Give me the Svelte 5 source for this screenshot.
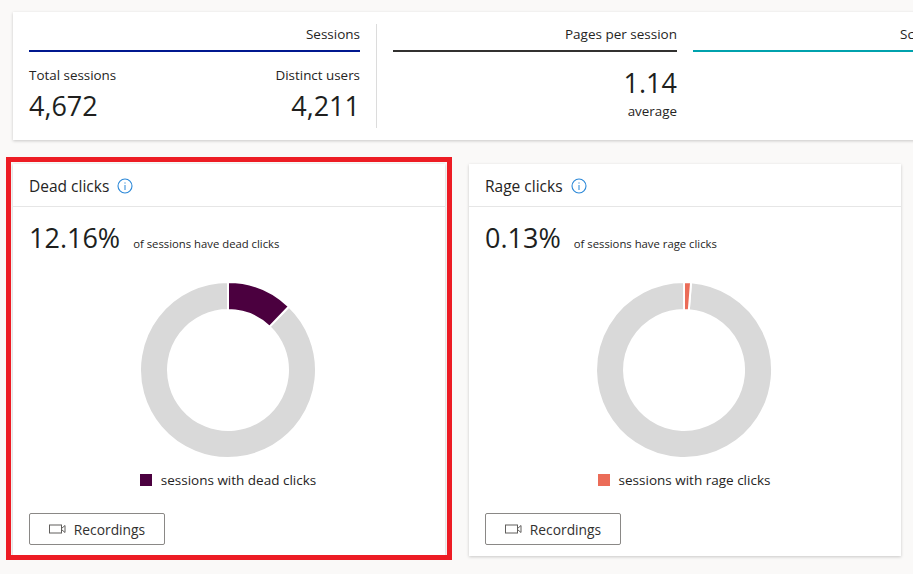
<script>
  const cards = [
    { title: 'Dead clicks', pct: '12.16%', note: 'of sessions have dead clicks', legend: 'sessions with dead clicks', color: '#4b003f', sweep: 43.8, marked: true },
    { title: 'Rage clicks', pct: '0.13%', note: 'of sessions have rage clicks', legend: 'sessions with rage clicks', color: '#eb6c58', sweep: 4.6, marked: false }
  ];

  function point(r, deg) {
    const a = ((deg - 90) * Math.PI) / 180;
    return `${(89 + r * Math.cos(a)).toFixed(2)} ${(89 + r * Math.sin(a)).toFixed(2)}`;
  }

  function slice(from, to) {
    const big = to - from > 180 ? 1 : 0;
    return `M${point(88, from)} A88 88 0 ${big} 1 ${point(88, to)} L${point(60, to)} A60 60 0 ${big} 0 ${point(60, from)} Z`;
  }
</script>

<div class="page">
  <section class="summary">
    <div class="group group--sessions">
      <div class="group__head group__head--blue">Sessions</div>
      <div class="pair">
        <div>
          <div class="label">Total sessions</div>
          <div class="big">4,672</div>
        </div>
        <div class="right">
          <div class="label">Distinct users</div>
          <div class="big">4,211</div>
        </div>
      </div>
    </div>
    <div class="divider"></div>
    <div class="group group--pages">
      <div class="group__head group__head--dark">Pages per session</div>
      <div class="right">
        <div class="big big--top">1.14</div>
        <div class="label">average</div>
      </div>
    </div>
    <div class="group group--scroll">
      <div class="group__head group__head--teal"><span class="scroll">Scroll depth</span></div>
    </div>
  </section>

  <div class="cards">
    {#each cards as card}
      <article class="card" class:card--marked={card.marked}>
        <header class="card__head">
          <h2>{card.title}</h2>
          <svg class="info" width="16" height="16" viewBox="0 0 16 16" aria-hidden="true">
            <circle cx="8" cy="8" r="7" fill="none" stroke="#2b88d8" stroke-width="1.1" />
            <rect x="7.5" y="7" width="1" height="5" fill="#2b88d8" />
            <rect x="7.5" y="4.4" width="1" height="1.2" fill="#2b88d8" />
          </svg>
        </header>
        <div class="card__stat">
          <span class="pct">{card.pct}</span>
          <span class="note">{card.note}</span>
        </div>
        <svg class="donut" width="178" height="178" viewBox="0 0 178 178" aria-hidden="true">
          <path d={slice(card.sweep, 360)} fill="#d9d9d9" stroke="#fff" stroke-width="2" />
          <path d={slice(0, card.sweep)} fill={card.color} stroke="#fff" stroke-width="2" />
        </svg>
        <div class="legend">
          <span class="swatch" style="background: {card.color}"></span>
          <span>{card.legend}</span>
        </div>
        <button class="btn" type="button">
          <svg width="17" height="10" viewBox="0 0 17 10" aria-hidden="true">
            <rect x="0.5" y="1" width="12" height="8" fill="none" stroke="#605e5c" />
            <path d="M12.5 4.5 L16 1.5 V8.5 L12.5 5.5" fill="none" stroke="#605e5c" />
          </svg>
          Recordings
        </button>
      </article>
    {/each}
  </div>
</div>

<style>
  :global(body) {
    margin: 0;
    background: #faf9f8;
  }
  .page {
    width: 913px;
    height: 574px;
    overflow: hidden;
    box-sizing: border-box;
    padding: 12px 0 0 13px;
    font-family: 'Open Sans', 'Noto Sans', sans-serif;
    color: #252423;
  }

  .summary {
    display: flex;
    width: 1100px;
    height: 128px;
    box-sizing: border-box;
    padding: 12px 16px 12px 16px;
    background: #fff;
    box-shadow: 0 1px 3px rgba(0, 0, 0, 0.2);
  }
  .group--sessions { width: 331px; }
  .group--pages { width: 284px; }
  .group--scroll { width: 400px; margin-left: 16px; }
  .divider {
    width: 1px;
    background: #dcdcdc;
    margin: 0 16px;
  }
  .group__head {
    height: 28px;
    box-sizing: border-box;
    text-align: right;
    font-size: 13.5px;
    line-height: 20px;
    border-bottom: 2px solid;
    margin-bottom: 13px;
  }
  .group__head--blue { border-color: #00188f; }
  .group__head--dark { border-color: #323130; }
  .group__head--teal { border-color: #00a2ad; text-align: left; padding-left: 207px; white-space: nowrap; }

  .pair {
    display: flex;
    justify-content: space-between;
  }
  .right { text-align: right; }
  .label {
    font-size: 13.4px;
    line-height: 20px;
  }
  .big {
    font-size: 27px;
    line-height: 36px;
    margin-top: 3px;
    color: #201f1e;
  }
  .big--top {
    margin-top: 1px;
    margin-bottom: 0;
  }

  .cards {
    display: grid;
    grid-template-columns: 432px 432px;
    gap: 24px;
    margin-top: 24px;
  }
  .card {
    position: relative;
    height: 392px;
    display: flex;
    flex-direction: column;
    background: #fff;
    box-shadow: 0 1px 3px rgba(0, 0, 0, 0.2);
  }
  .card--marked::after {
    content: '';
    position: absolute;
    inset: -7px -7px -4px -7px;
    border: 5px solid #ed1c24;
    pointer-events: none;
  }
  .card__head {
    display: flex;
    align-items: center;
    gap: 8px;
    height: 40px;
    padding: 2px 16px 0;
    border-bottom: 1px solid #e6e6e6;
  }
  .card__head h2 {
    margin: 0;
    font-size: 15.5px;
    font-weight: 400;
  }
  .card__stat {
    display: flex;
    align-items: baseline;
    gap: 13px;
    padding: 13px 16px 0;
    height: 48px;
    box-sizing: border-box;
  }
  .pct {
    font-size: 27px;
    line-height: 36px;
    color: #201f1e;
  }
  .note {
    font-size: 11.3px;
  }
  .donut {
    display: block;
    margin: 26px 0 0 126px;
  }
  .legend {
    display: flex;
    justify-content: center;
    align-items: center;
    gap: 9px;
    margin-top: 11px;
    padding-right: 2px;
    font-size: 13.5px;
    line-height: 20px;
  }
  .swatch {
    width: 12px;
    height: 12px;
  }
  .btn {
    display: flex;
    align-items: center;
    justify-content: center;
    gap: 8px;
    width: 136px;
    height: 32px;
    margin: 23px 0 0 16px;
    padding: 0;
    background: #fff;
    border: 1px solid #8a8886;
    border-radius: 2px;
    font-family: inherit;
    font-size: 13.8px;
    color: #323130;
  }
</style>
